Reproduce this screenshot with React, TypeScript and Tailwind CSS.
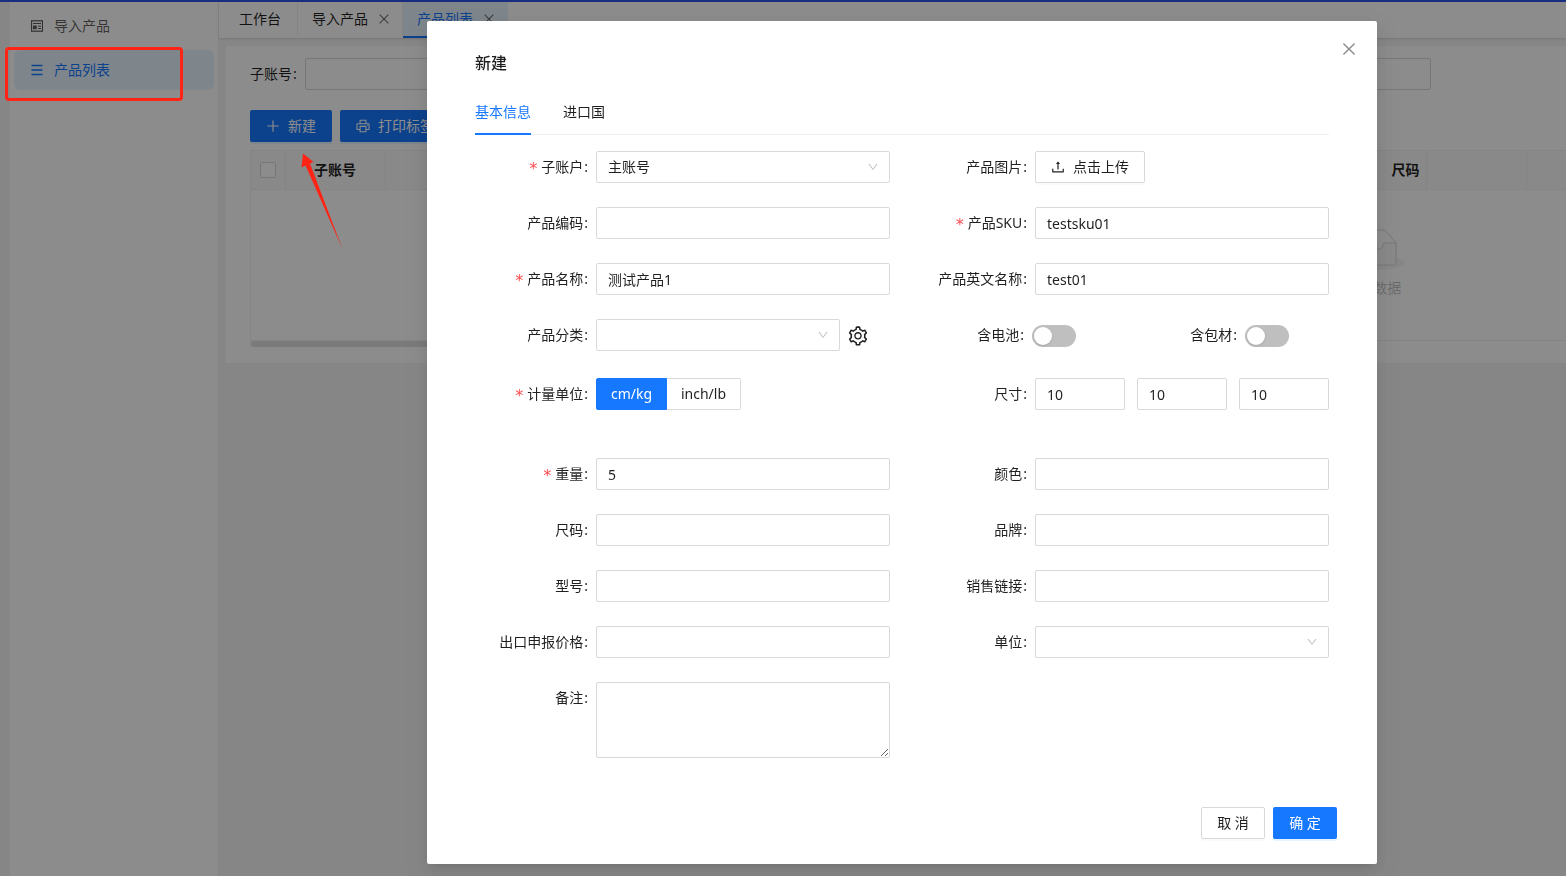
import React, { useState } from 'react';
import {
  AiOutlineClose,
  AiOutlineDown,
  AiOutlinePlus,
  AiOutlinePrinter,
  AiOutlineSetting,
  AiOutlineUpload,
} from 'react-icons/ai';

const inputClass =
  'h-8 w-full min-w-0 rounded-xs border border-[#d9d9d9] bg-white px-[11px] text-sm text-black/88 outline-none focus:border-[#1677ff]';

interface FieldProps {
  id: string;
  label: string;
  required?: boolean;
  children: React.ReactNode;
}

const FieldLabel = ({ id, label, required, className }: { id: string; label: string; required?: boolean; className: string }) => (
  <label htmlFor={id} className={`flex h-8 shrink-0 items-center justify-end pr-2 ${className}`}>
    {required && <span className="mr-[3px] pt-1 font-['DejaVu_Sans_Mono',monospace] text-base leading-none text-[#ff4d4f]">*</span>}
    {label}
    <span className="ml-px">:</span>
  </label>
);

const Field = ({ id, label, required, children }: FieldProps) => (
  <div className="flex items-start">
    <FieldLabel id={id} label={label} required={required} className="w-[145px]" />
    <div className="min-w-0 flex-1">{children}</div>
  </div>
);

const TextField = ({ id, label, required, value }: { id: string; label: string; required?: boolean; value?: string }) => (
  <Field id={id} label={label} required={required}>
    <input id={id} type="text" defaultValue={value} className={inputClass} />
  </Field>
);

const Select = ({ id, options }: { id: string; options: string[] }) => (
  <div className="relative w-full">
    <select id={id} className={`${inputClass} appearance-none`}>
      {options.map((option) => (
        <option key={option}>{option}</option>
      ))}
    </select>
    <AiOutlineDown className="pointer-events-none absolute top-[10px] right-[11px] size-3 text-black/25" />
  </div>
);

const Switch = ({ id }: { id: string }) => (
  <input
    id={id}
    type="checkbox"
    role="switch"
    className="mt-[2px] h-[22px] w-11 shrink-0 appearance-none rounded-full bg-black/25 p-[2px] before:block before:size-[18px] before:rounded-full before:bg-white before:shadow checked:bg-[#1677ff] checked:before:ml-[22px]"
  />
);

const NewsIcon = () => (
  <svg viewBox="0 0 12 12" className="size-3" fill="none" stroke="currentColor">
    <rect x="0.5" y="0.8" width="11" height="10.4" strokeWidth="1.2" />
    <path d="M2 3.5h8M7 6.2h3M7 8.5h3" />
    <rect x="2" y="5.5" width="3.7" height="3.7" fill="currentColor" stroke="none" />
  </svg>
);

const ListIcon = () => (
  <svg viewBox="0 0 12 12" className="size-3" fill="none" stroke="currentColor" strokeWidth="1.4">
    <path d="M0.5 1.5h11M0.5 6h11M0.5 10.5h11" />
  </svg>
);

const EmptyIcon = () => (
  <svg width="64" height="41" viewBox="0 0 64 41">
    <g transform="translate(0 1)" fill="none" fillRule="evenodd">
      <ellipse fill="#f5f5f5" cx="32" cy="33" rx="32" ry="7" />
      <g stroke="#d9d9d9">
        <path d="M55 12.76L44.854 1.258C44.367.474 43.656 0 42.907 0H21.093c-.749 0-1.46.474-1.947 1.257L9 12.761V22h46v-9.24z" />
        <path
          d="M41.613 15.931c0-1.605.994-2.93 2.227-2.931H55v18.137C55 33.26 53.68 35 52.05 35h-40.1C10.32 35 9 33.259 9 31.137V13h11.16c1.233 0 2.227 1.323 2.227 2.928v.022c0 1.605 1.005 2.901 2.237 2.901h14.752c1.232 0 2.237-1.308 2.237-2.913v-.007z"
          fill="#fafafa"
        />
      </g>
    </g>
  </svg>
);

const Sidebar = () => (
  <nav className="w-[209px] shrink-0 border-r border-[#f0f0f0] bg-white px-1 pt-1">
    <a href="#import" className="flex h-10 items-center gap-[11px] rounded-md px-[17px] text-black/65">
      <NewsIcon />
      导入产品
    </a>
    <a href="#list" className="mt-1 flex h-10 items-center gap-[11px] rounded-md bg-[#e6f4ff] px-[17px] text-[#1677ff]">
      <ListIcon />
      产品列表
    </a>
  </nav>
);

const PageTabs = () => (
  <div className="flex h-9 items-start bg-white shadow-sm">
    <a href="#home" className="flex h-[34px] w-[79px] items-center border-r border-[#f0f0f0] pl-5">
      工作台
    </a>
    <a href="#import" className="flex h-[34px] w-[105px] items-center gap-[9px] border-r border-[#f0f0f0] pl-[14px]">
      导入产品
      <AiOutlineClose className="size-[14px] text-black/55" />
    </a>
    <a href="#list" className="flex h-9 w-[105px] items-center gap-[9px] border-b-2 border-[#1677ff] bg-[#e6f4ff] pl-[14px] text-[#1677ff]">
      产品列表
      <AiOutlineClose className="size-[14px] text-black/55" />
    </a>
  </div>
);

const ProductTable = () => (
  <div className="mt-2 overflow-hidden border-l border-[#f0f0f0]">
    <table className="w-[171%] table-fixed border-collapse">
      <thead>
        <tr className="h-[39px] border-y border-[#f0f0f0] bg-[#fafafa]">
          <th className="w-[34px] border-r border-[#f0f0f0]">
            <input
              type="checkbox"
              aria-label="全选"
              className="mx-auto block size-4 appearance-none rounded-xs border border-[#d9d9d9] bg-white"
            />
          </th>
          <th className="w-[100px] border-r border-[#f0f0f0] font-semibold">子账号</th>
          <th className="w-[941px] border-r border-[#f0f0f0]" />
          <th className="w-[100px] border-r border-[#f0f0f0] pr-[6px] text-right font-semibold">尺码</th>
          <th className="w-[100px] border-r border-[#f0f0f0]" />
          <th />
        </tr>
      </thead>
      <tbody>
        <tr className="h-[151px] border-b border-[#f0f0f0]">
          <td colSpan={6}>
            <div className="flex flex-col items-center gap-2 pr-1 pb-1 text-black/25">
              <EmptyIcon />
              暂无数据
            </div>
          </td>
        </tr>
      </tbody>
    </table>
    <div className="h-[6px] w-2/3 rounded-full bg-[#dcdfe1]" />
  </div>
);

const ProductPage = () => (
  <main className="mt-2 ml-[7px] bg-white pt-3 pb-4 pl-6">
    <div className="flex pr-[135px]">
      <label htmlFor="search-account" className="flex h-8 w-[55px] items-center">
        子账号<span className="ml-px">:</span>
      </label>
      <input id="search-account" type="text" className="h-8 w-[294px] rounded-xs border border-[#d9d9d9] px-[11px]" />
      <input aria-label="关键词" type="text" className="ml-auto h-8 w-[294px] rounded-xs border border-[#d9d9d9] px-[11px]" />
    </div>
    <div className="mt-5 flex gap-2 text-white">
      <button className="flex h-8 items-center gap-[7px] rounded-xs bg-[#1677ff] pr-4 pl-[15px] shadow-[0_2px_0_rgba(5,145,255,0.1)]">
        <AiOutlinePlus className="size-4" />
        新建
      </button>
      <button className="flex h-8 items-center gap-[7px] rounded-xs bg-[#1677ff] pr-4 pl-[15px] shadow-[0_2px_0_rgba(5,145,255,0.1)]">
        <AiOutlinePrinter className="size-4" />
        打印标签
      </button>
    </div>
    <ProductTable />
  </main>
);

const UnitSwitch = () => {
  const [unit, setUnit] = useState('cm/kg');

  return (
    <div className="flex">
      {['cm/kg', 'inch/lb'].map((item, i) => (
        <label
          key={item}
          className={`flex h-8 items-center justify-center border ${i === 0 ? 'w-[71px] rounded-l-xs' : 'w-[74px] rounded-r-xs border-l-0'} ${
            unit === item ? 'border-[#1677ff] bg-[#1677ff] text-white' : 'border-[#d9d9d9] bg-white'
          }`}
        >
          <input
            id={i === 0 ? 'unit' : undefined}
            type="radio"
            name="unit"
            checked={unit === item}
            onChange={() => setUnit(item)}
            className="sr-only"
          />
          {item}
        </label>
      ))}
    </div>
  );
};

const ProductForm = () => (
  <form className="grid grid-cols-2 gap-y-6 pt-4 pr-12 pl-6">
    <Field id="account" label="子账户" required>
      <Select id="account" options={['主账号']} />
    </Field>
    <Field id="upload" label="产品图片">
      <button
        id="upload"
        type="button"
        className="flex h-8 items-center gap-[7px] rounded-xs border border-[#d9d9d9] pr-[15px] pl-[14px] shadow-[0_2px_0_rgba(0,0,0,0.02)]"
      >
        <AiOutlineUpload className="size-4" />
        点击上传
      </button>
    </Field>

    <TextField id="code" label="产品编码" />
    <TextField id="sku" label="产品SKU" required value="testsku01" />
    <TextField id="name" label="产品名称" required value="测试产品1" />
    <TextField id="name-en" label="产品英文名称" value="test01" />

    <Field id="category" label="产品分类">
      <div className="flex items-center pb-[3px]">
        <div className="w-[244px]">
          <Select id="category" options={['']} />
        </div>
        <button type="button" aria-label="分类设置" className="ml-[7px] pt-px">
          <AiOutlineSetting className="size-[22px]" />
        </button>
      </div>
    </Field>
    <div className="flex h-8 items-center">
      <FieldLabel id="battery" label="含电池" className="w-[142px]" />
      <Switch id="battery" />
      <FieldLabel id="package" label="含包材" className="w-[169px]" />
      <Switch id="package" />
    </div>

    <Field id="unit" label="计量单位" required>
      <div className="pb-6">
        <UnitSwitch />
      </div>
    </Field>
    <Field id="length" label="尺寸">
      <div className="grid grid-cols-3 gap-3">
        <input id="length" aria-label="长" type="text" defaultValue="10" className={inputClass} />
        <input aria-label="宽" type="text" defaultValue="10" className={inputClass} />
        <input aria-label="高" type="text" defaultValue="10" className={inputClass} />
      </div>
    </Field>

    <TextField id="weight" label="重量" required value="5" />
    <TextField id="color" label="颜色" />
    <TextField id="size" label="尺码" />
    <TextField id="brand" label="品牌" />
    <TextField id="model" label="型号" />
    <TextField id="link" label="销售链接" />
    <TextField id="price" label="出口申报价格" />
    <Field id="quantity-unit" label="单位">
      <Select id="quantity-unit" options={['']} />
    </Field>
    <Field id="remark" label="备注">
      <textarea
        id="remark"
        className="block h-[76px] w-full resize-y rounded-xs border border-[#d9d9d9] px-[11px] py-1 outline-none"
      />
    </Field>
  </form>
);

const CreateModal = () => (
  <div className="fixed inset-0 flex items-start justify-center overflow-hidden bg-black/45 pt-[21px] pl-[238px]">
    <div
      role="dialog"
      aria-labelledby="modal-title"
      className="w-full max-w-[950px] rounded-xs bg-white pb-[25px] shadow-[0_6px_16px_0_rgba(0,0,0,0.08),0_3px_6px_-4px_rgba(0,0,0,0.12),0_9px_28px_8px_rgba(0,0,0,0.05)]"
    >
      <div className="flex items-start justify-between pt-[19px] pr-[19px] pl-12">
        <h2 id="modal-title" className="pt-[11px] text-base font-medium text-black/88">
          新建
        </h2>
        <button aria-label="关闭" className="text-black/45">
          <AiOutlineClose className="size-[18px]" />
        </button>
      </div>
      <div className="mx-12 mt-3 flex gap-8 border-b border-[#f0f0f0]">
        <button className="-mb-px h-12 border-b-2 border-[#1677ff] pt-1 text-[#1677ff]">基本信息</button>
        <button className="-mb-px h-12 border-b-2 border-transparent pt-1">进口国</button>
      </div>
      <ProductForm />
      <div className="mt-[49px] flex justify-end gap-2 pr-10">
        <button className="h-8 w-16 rounded-xs border border-[#d9d9d9] shadow-[0_2px_0_rgba(0,0,0,0.02)]">取 消</button>
        <button className="h-8 w-16 rounded-xs bg-[#1677ff] text-white shadow-[0_2px_0_rgba(5,145,255,0.1)]">确 定</button>
      </div>
    </div>
  </div>
);

// red box and arrow pointing out the menu entry and the create button
const Annotations = () => (
  <>
    <div className="pointer-events-none absolute top-[47px] left-[5px] h-[54px] w-[178px] rounded-sm border-3 border-[#ff2416]" />
    <svg className="pointer-events-none absolute top-[150px] left-[298px]" width="50" height="100" viewBox="298 150 50 100">
      <path d="M303 153.500L313.500 162L310 163.500L342.500 249L305.500 165.500L301.500 167.500Z" fill="#ff2416" />
    </svg>
  </>
);

const App = () => {
  return (
    <div className="relative min-h-screen bg-[#f5f5f5] font-['Noto_Sans','Noto_Sans_CJK_SC',sans-serif] text-sm text-black/88">
      <div className="flex min-h-screen border-t-2 border-[#2f54eb] pl-[10px]">
        <Sidebar />
        <div className="min-w-0 flex-1">
          <PageTabs />
          <ProductPage />
        </div>
      </div>
      <CreateModal />
      <Annotations />
    </div>
  );
};

export default App;
